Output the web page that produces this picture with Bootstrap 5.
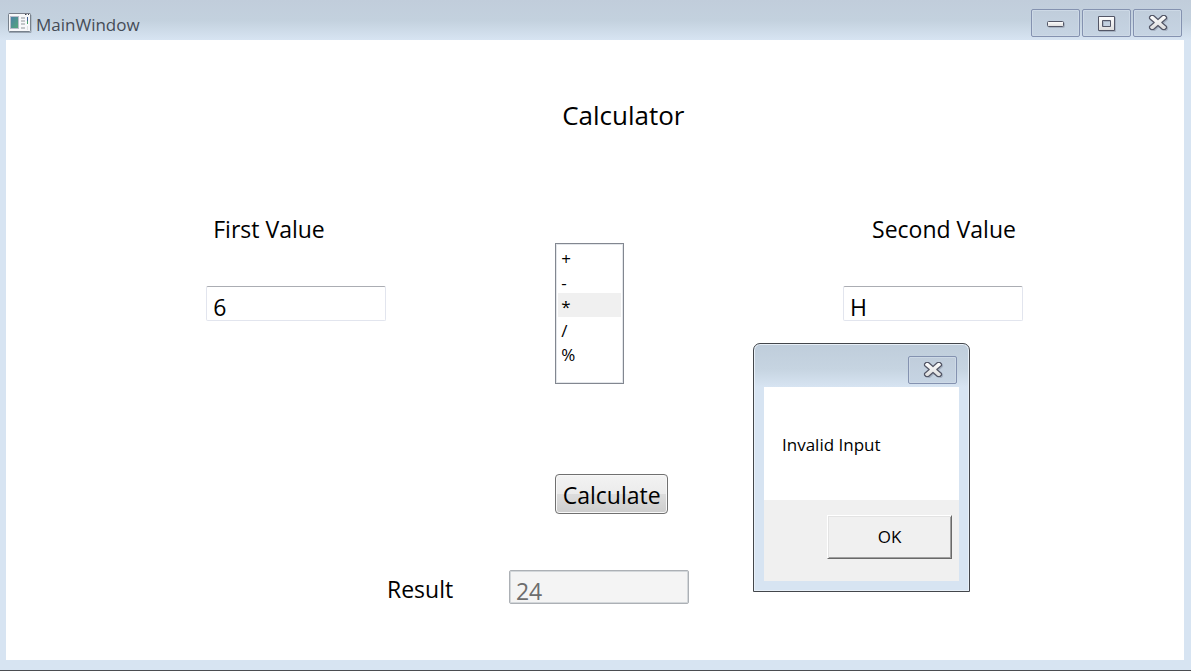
<!DOCTYPE html>
<html lang="en">
<head>
<meta charset="utf-8">
<meta name="viewport" content="width=device-width, initial-scale=1">
<title>MainWindow</title>
<link href="https://cdn.jsdelivr.net/npm/bootstrap@5.3.0/dist/css/bootstrap.min.css" rel="stylesheet">
<style>
  body { font-family: "Open Sans", "Noto Sans", sans-serif; font-size: 23px; line-height: 32px; color: #000; background: #d7e4f2; }
  .window { border-bottom: 1px solid #4b4d51; padding: 0 7px 10px 6px; }
  .title-strip { height: 40px; margin: 0 -7px 0 -6px; padding: 9px 9px 3px 8px; background: linear-gradient(#c1cddb, #c3d1de 50%, #d7e4f2); }
  .caption { font-size: 17px; line-height: 24px; color: #454c57; margin-top: 4px; }
  .app-icon { margin-top: 3px; }
  .win-controls { gap: 2px; }
  .win-btn { width: 49px; height: 28px; padding: 0; border: 1px solid #8492b0; border-radius: 2px; background: linear-gradient(#c0cddb, #c6d4e3); box-shadow: inset 0 0 0 1px #cdd9e6; display: flex; align-items: center; justify-content: center; }
  .win-btn svg { filter: drop-shadow(1px 1px 0 #a6b2c2); }
  .client { background: #fff; }
  .calc-grid { display: grid; grid-template-columns: 349fr 288fr 341fr; padding-left: 17%; }
  .calc-title { grid-column: 2; font-size: 26px; line-height: 36px; font-weight: 400; margin: 57px 0 81px; padding-left: 7px; }
  .operand { grid-column: 1; }
  .operand label { display: block; padding: 0 7px; height: 72px; line-height: 30px; }
  .operand-second { grid-column: 3; }
  .operand-second label { padding-left: 29px; }
  .value-box { display: block; width: 180px; height: 35px; padding: 6px 6px 0; border: 1px solid #e2e5ee; border-top-color: #abadb3; border-radius: 2px; color: #000; line-height: 28px; background: #fff; }
  .value-box:disabled { height: 34px; padding-top: 7px; border: 1px solid #acb0b5; box-shadow: inset 0 0 0 1px #d3d7da; background: #f4f4f4; color: #6d6d6d; }
  .operators { display: block; width: 69px; height: 141px; margin-top: 29px; padding: 1px 2px; border: 1px solid #828790; border-radius: 0; font-size: 17px; overflow: hidden; background: #fff; color: #000; scrollbar-width: none; box-shadow: inset 0 0 0 1px #e3e6ea; }
  .operators option { height: 24px; min-height: 24px; line-height: 22px; padding: 2px 3px 0; color: #000; }
  .operators option:checked { background: linear-gradient(#f0f0f0, #f0f0f0); color: #000; }
  .calc-btn { grid-column: 2; justify-self: start; height: 40px; width: 113px; margin-top: 90px; padding: 2px 0 0; border: 1px solid #707070; border-radius: 4px; color: #000; background: linear-gradient(#f3f3f3, #ebebeb 50%, #dddddd 50%, #cdcdcd); box-shadow: inset 0 0 0 1px #f8f8f8; }
  .result-row { display: grid; grid-template-columns: 122fr 675fr; padding-left: 32.34%; margin-top: 56px; }
  .result-row label { padding-top: 3px; }
  .dialog-box { top: 303px; right: 214px; width: 217px; border: 1px solid #43464b; border-radius: 7px 7px 0 0; padding: 12px 10px 10px; background: linear-gradient(#bfcddb, #c6d4e1 25px, #d7e4f2 43px); box-shadow: inset 0 0 0 1px #e8f0f8; font-size: 17px; line-height: 24px; }
  .dialog-controls { padding-right: 2px; }
  .dialog-box .message { background: #fff; height: 113px; margin-top: 3px; padding: 46px 18px 0; }
  .dialog-box .actions { background: #f0f0f0; height: 81px; padding: 15px 7px 0; }
  .ok-btn { width: 125px; height: 44px; border: 1px solid; border-color: #fff #696969 #696969 #fff; background: #f0f0f0; box-shadow: inset 1px 1px 0 #e3e3e3, inset -1px -1px 0 #a0a0a0; color: #000; padding: 0; }
</style>
</head>
<body>
<svg width="0" height="0" class="position-absolute" aria-hidden="true">
  <linearGradient id="glyph" x1="0" y1="0" x2="0" y2="1"><stop offset="0" stop-color="#fff"/><stop offset="1" stop-color="#dcdcdc"/></linearGradient>
  <symbol id="close-x" viewBox="0 0 20 18">
    <path d="M3 1.500h2.500L10 5.500l4.500-4H17l1.500 1.500v1.500L13.800 8.500l4.700 4V14L17 15.500h-2.500L10 11.500l-4.500 4H3L1.500 14v-1.500l4.700-4-4.700-4V3z" fill="url(#glyph)" stroke="#535666" stroke-width="1.200" stroke-linejoin="round"/>
  </symbol>
</svg>
<div class="window d-flex flex-column min-vh-100">
  <header class="title-strip d-flex align-items-start">
    <svg class="app-icon flex-shrink-0" width="24" height="22" viewBox="0 0 24 22" aria-hidden="true">
      <defs><linearGradient id="pane" x1="0" y1="0" x2="1" y2="1"><stop offset="0" stop-color="#4a7fa8"/><stop offset="1" stop-color="#55a878"/></linearGradient></defs>
      <path d="M1 20.500h22V3" fill="none" stroke="#9aa5b2"/>
      <rect x=".5" y="1.500" width="22" height="18" rx="1" fill="#f7f8fa" stroke="#77818c"/>
      <path d="M1 1.500h21" stroke="#777d89"/>
      <path d="M17 2.500h1.500M20 2.500h1" stroke="#3d414a"/>
      <rect x="2.500" y="4.500" width="8" height="12" fill="url(#pane)" stroke="#b9bccb"/>
      <path d="M13 6h4M13 9h4M13 12h4M13 16h4" stroke="#c4c7ca" stroke-width="2"/>
      <path d="M19.500 5v4" stroke="#426197"/><path d="M19.500 9v3" stroke="#48a06b"/><path d="M19.500 14v4" stroke="#dedfe2"/>
    </svg>
    <span class="caption ms-1">MainWindow</span>
    <div class="win-controls ms-auto d-flex">
      <button class="win-btn" type="button" aria-label="Minimize"><svg width="19" height="10" viewBox="0 0 19 10"><rect x="1.500" y="3.500" width="16" height="5" rx="1" fill="url(#glyph)" stroke="#535666"/></svg></button>
      <button class="win-btn" type="button" aria-label="Maximize"><svg width="19" height="18" viewBox="0 0 19 18"><path d="M1.500 2.500h16v14h-16zM5.500 6.500v6h8v-6z" fill="url(#glyph)" fill-rule="evenodd" stroke="#535666"/></svg></button>
      <button class="win-btn" type="button" aria-label="Close"><svg width="20" height="18"><use href="#close-x"/></svg></button>
    </div>
  </header>
  <main class="client position-relative flex-grow-1">
    <form>
      <div class="calc-grid">
        <h1 class="calc-title">Calculator</h1>
        <div class="operand">
          <label for="first">First Value</label>
          <input class="value-box" id="first" type="text" value="6">
        </div>
        <select class="operators" size="5" aria-label="Operator">
          <option>+</option><option>-</option><option selected>*</option><option>/</option><option>%</option>
        </select>
        <div class="operand operand-second">
          <label for="second">Second Value</label>
          <input class="value-box" id="second" type="text" value="H">
        </div>
        <button class="calc-btn" type="button">Calculate</button>
      </div>
      <div class="result-row">
        <label for="result">Result</label>
        <input class="value-box" id="result" type="text" value="24" disabled>
      </div>
    </form>
    <section class="dialog-box position-absolute" role="dialog" aria-labelledby="dialog-message">
      <div class="dialog-controls d-flex justify-content-end">
        <button class="win-btn" type="button" aria-label="Close message"><svg width="20" height="18"><use href="#close-x"/></svg></button>
      </div>
      <div class="message" id="dialog-message">Invalid Input</div>
      <div class="actions d-flex justify-content-end"><button class="ok-btn" type="button">OK</button></div>
    </section>
  </main>
</div>
<script src="https://cdn.jsdelivr.net/npm/bootstrap@5.3.0/dist/js/bootstrap.bundle.min.js"></script>
</body>
</html>
